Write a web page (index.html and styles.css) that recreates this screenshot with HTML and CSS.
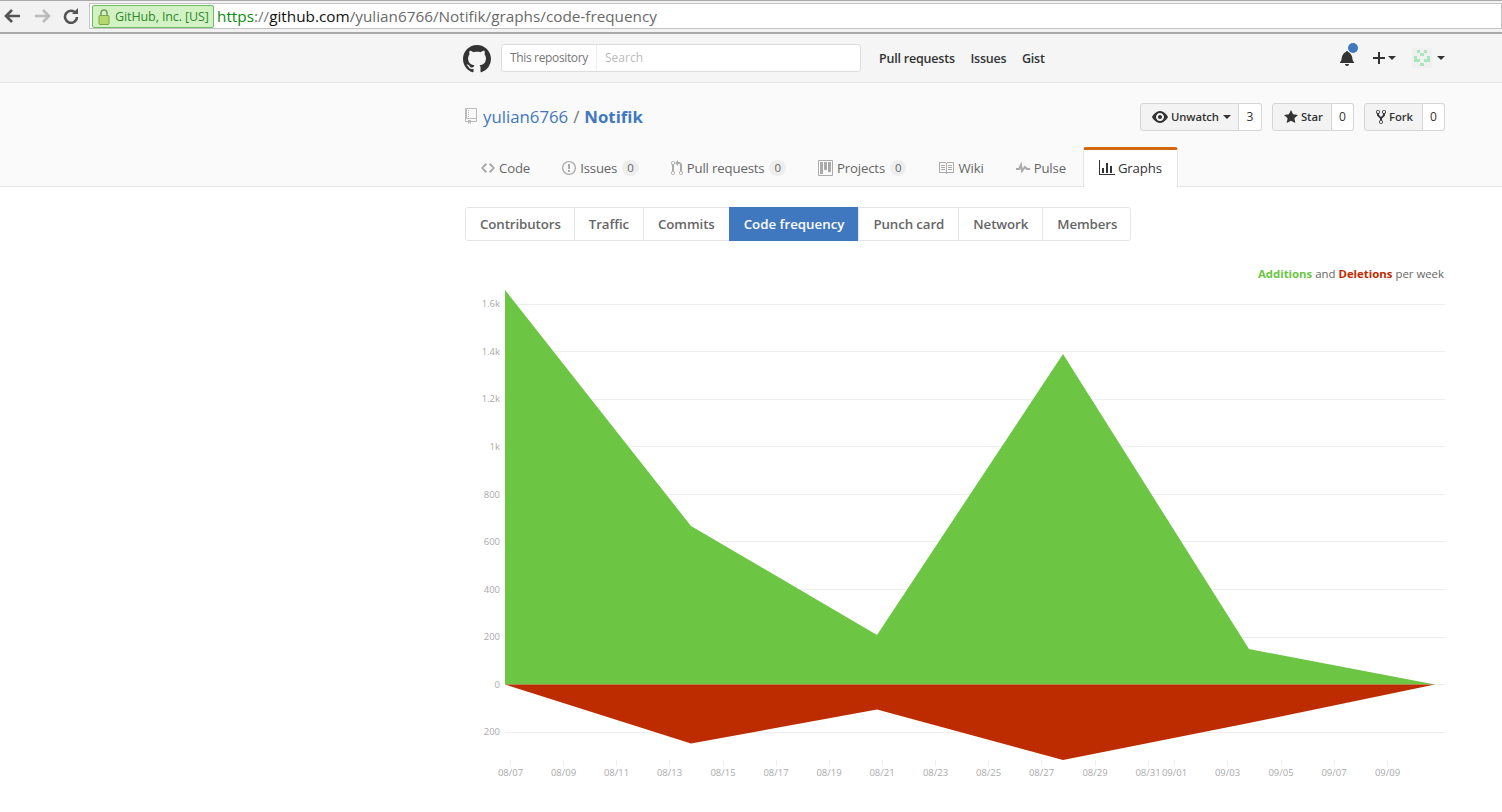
FILE: index.html
```html
<!DOCTYPE html>
<html lang="en">

<head>
    <meta charset="UTF-8">
    <title>Code frequency</title>
    <link rel="stylesheet" href="styles.css">
</head>

<body>
    <div class="browser-bar">
        <svg class="nav-icon" width="18" height="16" viewBox="0 0 18 16"><path d="M8 2 2 8l6 6M2 8h14" fill="none" stroke="#555" stroke-width="2.6"/></svg>
        <svg class="nav-icon" width="18" height="16" viewBox="0 0 18 16"><path d="M10 2l6 6-6 6M16 8H2" fill="none" stroke="#bbb" stroke-width="2.6"/></svg>
        <svg class="nav-icon" width="18" height="16" viewBox="0 0 18 16"><path d="M14 5.5A6 6 0 1 0 15 9" fill="none" stroke="#555" stroke-width="2.6"/><path d="M10 6h6V0z" fill="#555"/></svg>
        <div class="omnibox">
            <div class="ev-badge">
                <svg width="12" height="17" viewBox="0 0 12 17"><path d="M3 8V5a3 3 0 0 1 6 0v3" fill="none" stroke="#7a9a5a" stroke-width="1.5"/><rect x="1" y="7.5" width="10" height="9" rx="1" fill="#b5d96b" stroke="#7fa24f"/></svg>
                <span>GitHub, Inc. [US]</span>
            </div>
            <div class="url"><span class="url-scheme">https</span><span class="url-sep">://</span><span class="url-host">github.com</span>/yulian6766/Notifik/graphs/code-frequency</div>
        </div>
    </div>

    <header class="site-header">
        <div class="container header-inner">
            <svg class="logo" width="28" height="28" viewBox="0 0 16 16"><path d="M8 0C3.58 0 0 3.58 0 8c0 3.54 2.29 6.53 5.47 7.59.4.07.55-.17.55-.38 0-.19-.01-.82-.01-1.49-2.01.37-2.53-.49-2.69-.94-.09-.23-.48-.94-.82-1.13-.28-.15-.68-.52-.01-.53.63-.01 1.08.58 1.23.82.72 1.21 1.87.87 2.33.66.07-.52.28-.87.51-1.07-1.78-.2-3.64-.89-3.64-3.95 0-.87.31-1.59.82-2.15-.08-.2-.36-1.02.08-2.12 0 0 .67-.21 2.2.82.64-.18 1.32-.27 2-.27.68 0 1.36.09 2 .27 1.53-1.04 2.2-.82 2.2-.82.44 1.1.16 1.92.08 2.12.51.56.82 1.27.82 2.15 0 3.07-1.87 3.75-3.65 3.95.29.25.54.73.54 1.48 0 1.07-.01 1.93-.01 2.2 0 .21.15.46.55.38A8.013 8.013 0 0 0 16 8c0-4.42-3.58-8-8-8z" fill="#333"/></svg>
            <div class="search">
                <span class="search-scope">This repository</span>
                <span class="search-input">Search</span>
            </div>
            <nav class="header-nav">
                <a>Pull requests</a>
                <a>Issues</a>
                <a>Gist</a>
            </nav>
            <div class="header-right">
                <span class="bell">
                    <svg width="14" height="16" viewBox="0 0 14 16"><path d="M14 12v1H0v-1l.73-.58c.77-.77.81-2.55 1.19-4.42C2.69 3.23 6 2 6 2c0-.55.45-1 1-1s1 .45 1 1c0 0 3.39 1.23 4.16 5 .38 1.88.42 3.66 1.19 4.42l.66.58H14zm-7 4c1.11 0 2-.89 2-2H5c0 1.11.89 2 2 2z" fill="#333"/></svg>
                    <span class="bell-dot"></span>
                </span>
                <span class="header-menu">
                    <svg width="12" height="16" viewBox="0 0 12 16"><path d="M12 9H7v5H5V9H0V7h5V2h2v5h5v2z" fill="#333"/></svg>
                    <span class="caret"></span>
                </span>
                <span class="header-menu">
                    <svg class="avatar" width="20" height="20" viewBox="0 0 20 20">
                        <rect width="20" height="20" fill="#f0f0f0"/>
                        <path d="M2 8h3v3H2zM15 8h3v3h-3zM2 11h3v3H2zM15 11h3v3h-3zM5 2h3v3H5zM12 2h3v3h-3zM8 5h4v3H8zM5 11h3v3H5zM12 11h3v3h-3zM8 15h4v3H8z" fill="#a8e6c0"/>
                    </svg>
                    <span class="caret"></span>
                </span>
            </div>
        </div>
    </header>

    <div class="pagehead">
        <div class="container">
            <div class="repo-row">
                <h1 class="repo-title">
                    <svg class="repo-icon" width="12" height="16" viewBox="0 0 12 16"><path d="M4 9H3V8h1v1zm0-3H3v1h1V6zm0-2H3v1h1V4zm0-2H3v1h1V2zm8-1v12c0 .55-.45 1-1 1H6v2l-1.5-1.5L3 16v-2H1c-.55 0-1-.45-1-1V1c0-.55.45-1 1-1h10c.55 0 1 .45 1 1zm-1 10H1v2h2v-1h3v1h5v-2zm0-10H2v9h9V1z" fill="#bbb"/></svg>
                    <a>yulian6766</a>
                    <span class="repo-sep">/</span>
                    <a class="repo-name">Notifik</a>
                </h1>
                <ul class="repo-actions">
                    <li class="action">
                        <span class="action-btn action-btn-watch">
                            <svg width="16" height="16" viewBox="0 0 16 16"><path d="M8.06 2C3 2 0 8 0 8s3 6 8.06 6C13 14 16 8 16 8s-3-6-7.94-6zM8 12c-2.2 0-4-1.78-4-4 0-2.2 1.8-4 4-4 2.22 0 4 1.8 4 4 0 2.22-1.78 4-4 4zm2-4c0 1.11-.89 2-2 2-1.11 0-2-.89-2-2 0-1.11.89-2 2-2 1.11 0 2 .89 2 2z" fill="#333"/></svg>
                            Unwatch
                            <span class="caret caret-small"></span>
                        </span>
                        <span class="action-count action-count-watch">3</span>
                    </li>
                    <li class="action">
                        <span class="action-btn action-btn-star">
                            <svg width="14" height="16" viewBox="0 0 14 16"><path d="M14 6l-4.9-.64L7 1 4.9 5.36 0 6l3.6 3.26L2.67 14 7 11.67 11.33 14l-.93-4.74L14 6z" fill="#333"/></svg>
                            Star
                        </span>
                        <span class="action-count">0</span>
                    </li>
                    <li class="action">
                        <span class="action-btn action-btn-fork">
                            <svg width="10" height="16" viewBox="0 0 10 16"><path d="M8 1a1.993 1.993 0 0 0-1 3.72V6L5 8 3 6V4.72A1.993 1.993 0 0 0 2 1a1.993 1.993 0 0 0-1 3.72V6.5l3 3v1.78A1.993 1.993 0 0 0 5 15a1.993 1.993 0 0 0 1-3.72V9.5l3-3V4.72A1.993 1.993 0 0 0 8 1zM2 4.2C1.34 4.2.8 3.65.8 3c0-.65.55-1.2 1.2-1.2.65 0 1.2.55 1.2 1.2 0 .65-.55 1.2-1.2 1.2zm3 10c-.66 0-1.2-.55-1.2-1.2 0-.65.55-1.2 1.2-1.2.65 0 1.2.55 1.2 1.2 0 .65-.55 1.2-1.2 1.2zm3-10c-.66 0-1.2-.55-1.2-1.2 0-.65.55-1.2 1.2-1.2.65 0 1.2.55 1.2 1.2 0 .65-.55 1.2-1.2 1.2z" fill="#333"/></svg>
                            Fork
                        </span>
                        <span class="action-count">0</span>
                    </li>
                </ul>
            </div>
            <nav class="repo-tabs">
                <a class="tab">
                    <svg width="14" height="16" viewBox="0 0 14 16"><path d="M9.5 3L8 4.5 11.5 8 8 11.5 9.5 13 14 8 9.5 3zm-5 0L0 8l4.5 5L6 11.5 2.5 8 6 4.5 4.5 3z"/></svg>
                    Code
                </a>
                <a class="tab">
                    <svg width="14" height="16" viewBox="0 0 14 16"><path d="M7 2.3c3.14 0 5.7 2.56 5.7 5.7s-2.56 5.7-5.7 5.7A5.71 5.71 0 0 1 1.3 8c0-3.14 2.56-5.7 5.7-5.7zM7 1C3.14 1 0 4.14 0 8s3.14 7 7 7 7-3.14 7-7-3.14-7-7-7zm1 3H6v5h2V4zm0 6H6v2h2v-2z"/></svg>
                    Issues <span class="counter">0</span>
                </a>
                <a class="tab">
                    <svg width="12" height="16" viewBox="0 0 12 16"><path d="M11 11.28V5c-.03-.78-.34-1.47-.94-2.06C9.46 2.35 8.78 2.03 8 2H7V0L4 3l3 3V4h1c.27.02.48.11.69.31.21.2.3.42.31.69v6.28A1.993 1.993 0 0 0 10 15a1.993 1.993 0 0 0 1-3.72zm-1 2.92c-.66 0-1.2-.55-1.2-1.2 0-.65.55-1.2 1.2-1.2.65 0 1.2.55 1.2 1.2 0 .65-.55 1.2-1.2 1.2zM4 3c0-1.11-.89-2-2-2a1.993 1.993 0 0 0-1 3.72v6.56A1.993 1.993 0 0 0 2 15a1.993 1.993 0 0 0 1-3.72V4.72c.59-.34 1-.98 1-1.72zm-.8 10c0 .66-.55 1.2-1.2 1.2-.65 0-1.2-.55-1.2-1.2 0-.65.55-1.2 1.2-1.2.65 0 1.2.55 1.2 1.2zM2 4.2C1.34 4.2.8 3.65.8 3c0-.65.55-1.2 1.2-1.2.65 0 1.2.55 1.2 1.2 0 .65-.55 1.2-1.2 1.2z"/></svg>
                    Pull requests <span class="counter">0</span>
                </a>
                <a class="tab">
                    <svg width="15" height="16" viewBox="0 0 15 16"><path fill-rule="evenodd" d="M10 12h3V2h-3v10zm-4-2h3V2H6v8zm-4 4h3V2H2v12zm-1 1h13V1H1v14zM14 0H1a1 1 0 0 0-1 1v14a1 1 0 0 0 1 1h13a1 1 0 0 0 1-1V1a1 1 0 0 0-1-1z"/></svg>
                    Projects <span class="counter">0</span>
                </a>
                <a class="tab">
                    <svg width="16" height="16" viewBox="0 0 16 16"><path d="M3 5h4v1H3V5zm0 3h4V7H3v1zm0 2h4V9H3v1zm11-5h-4v1h4V5zm0 2h-4v1h4V7zm0 2h-4v1h4V9zm2-6v9c0 .55-.45 1-1 1H9.5l-1 1-1-1H2c-.55 0-1-.45-1-1V3c0-.55.45-1 1-1h5.5l1 1 1-1H15c.55 0 1 .45 1 1zm-8 .5L7.5 3H2v9h6V3.5zm7-.5H9.5l-.5.5V12h6V3z"/></svg>
                    Wiki
                </a>
                <a class="tab">
                    <svg width="14" height="16" viewBox="0 0 14 16"><path d="M11.5 8L8.8 5.4 6.6 8.5 5.5 1.6 2.38 8H0v2h3.6l.9-1.8.9 5.4L9 8.5l1.6 1.5H14V8z"/></svg>
                    Pulse
                </a>
                <a class="tab tab-selected">
                    <svg width="16" height="16" viewBox="0 0 16 16"><path d="M16 14v1H0V0h1v14h15zM5 13H3V8h2v5zm4 0H7V3h2v10zm4 0h-2V6h2v7z"/></svg>
                    Graphs
                </a>
            </nav>
        </div>
    </div>

    <main class="container">
        <nav class="subnav">
            <a class="subnav-item">Contributors</a>
            <a class="subnav-item">Traffic</a>
            <a class="subnav-item">Commits</a>
            <a class="subnav-item subnav-selected">Code frequency</a>
            <a class="subnav-item">Punch card</a>
            <a class="subnav-item">Network</a>
            <a class="subnav-item">Members</a>
        </nav>

        <p class="legend"><b class="legend-add">Additions</b> and <b class="legend-del">Deletions</b> per week</p>

        <!-- viewBox uses page coordinates so the points read straight off the reference -->
        <svg class="chart" width="980" height="506" viewBox="465 284 980 506">
            <g class="grid">
                <line x1="505" x2="1445" y1="304.5" y2="304.5"/>
                <line x1="505" x2="1445" y1="351.5" y2="351.5"/>
                <line x1="505" x2="1445" y1="399.5" y2="399.5"/>
                <line x1="505" x2="1445" y1="446.5" y2="446.5"/>
                <line x1="505" x2="1445" y1="494.5" y2="494.5"/>
                <line x1="505" x2="1445" y1="541.5" y2="541.5"/>
                <line x1="505" x2="1445" y1="589.5" y2="589.5"/>
                <line x1="505" x2="1445" y1="637.5" y2="637.5"/>
                <line x1="505" x2="1445" y1="684.5" y2="684.5"/>
                <line x1="505" x2="1445" y1="732.5" y2="732.5"/>
            </g>
            <polygon class="area-add" points="505,290 691,526 877,635 1063,354 1249,649 1435,684.5 505,684.5"/>
            <polygon class="area-del" points="505,684.5 691,743.5 877,709.5 1063,760 1249,723 1435,684.5"/>
            <g class="y-labels">
                <text x="500" y="307">1.6k</text>
                <text x="500" y="355">1.4k</text>
                <text x="500" y="402">1.2k</text>
                <text x="500" y="450">1k</text>
                <text x="500" y="498">800</text>
                <text x="500" y="545">600</text>
                <text x="500" y="593">400</text>
                <text x="500" y="640">200</text>
                <text x="500" y="688">0</text>
                <text x="500" y="735">200</text>
            </g>
            <g class="x-ticks">
                <path d="M510.5 760v6M563.5 760v6M616.5 760v6M669.5 760v6M723.5 760v6M776.5 760v6M829.5 760v6M882.5 760v6M935.5 760v6M988.5 760v6M1041.5 760v6M1095.5 760v6M1148.5 760v6M1174.5 760v6M1227.5 760v6M1281.5 760v6M1334.5 760v6M1387.5 760v6"/>
            </g>
            <g class="x-labels">
                <text x="510.5" y="776">08/07</text>
                <text x="563.5" y="776">08/09</text>
                <text x="616.5" y="776">08/11</text>
                <text x="669.5" y="776">08/13</text>
                <text x="723" y="776">08/15</text>
                <text x="776" y="776">08/17</text>
                <text x="829" y="776">08/19</text>
                <text x="882" y="776">08/21</text>
                <text x="935.5" y="776">08/23</text>
                <text x="988.5" y="776">08/25</text>
                <text x="1041.5" y="776">08/27</text>
                <text x="1095" y="776">08/29</text>
                <text x="1148" y="776">08/31</text>
                <text x="1174.5" y="776">09/01</text>
                <text x="1227.5" y="776">09/03</text>
                <text x="1281" y="776">09/05</text>
                <text x="1334" y="776">09/07</text>
                <text x="1387.5" y="776">09/09</text>
            </g>
        </svg>
    </main>
</body>

</html>
```

FILE: styles.css
```css
html, body {
    margin: 0;
    padding: 0;
    height: 812px;
    overflow: hidden;
}

body {
    font-family: "Open Sans", "Noto Sans", sans-serif;
    font-size: 13px;
    color: #333;
    background: #fff;
}

.container {
    width: 980px;
    margin-left: 465px;
}

.browser-bar {
    display: flex;
    align-items: center;
    height: 34px;
    box-sizing: border-box;
    padding: 2px 0 3px 4px;
    background: #f2f2f2;
    border-top: 1px solid #aaa;
    border-bottom: 2px solid #a9a9a9;
}

.nav-icon {
    margin-right: 11px;
    flex: none;
}

.omnibox {
    flex: 1;
    display: flex;
    align-items: center;
    gap: 3px;
    height: 26px;
    box-sizing: border-box;
    margin-left: -2px;
    padding-left: 2px;
    background: #fff;
    border: 1px solid #c4c4c4;
}

.ev-badge {
    display: flex;
    align-items: center;
    gap: 5px;
    width: 122px;
    height: 23px;
    box-sizing: border-box;
    padding-left: 5px;
    font-size: 12.5px;
    letter-spacing: -0.1px;
    white-space: nowrap;
    color: #2b8a2b;
    background: #d3f2c4;
    border: 1px solid #6dbb62;
    border-radius: 2px;
}

.url {
    font-size: 15.3px;
    color: #6a6a6a;
    white-space: nowrap;
}

.url-scheme {
    color: #0a8a0a;
}

.url-sep {
    color: #777;
}

.url-host {
    color: #111;
}

.site-header {
    height: 49px;
    box-sizing: border-box;
    background: #f5f5f5;
    border-bottom: 1px solid #e5e5e5;
}

.header-inner {
    display: flex;
    align-items: center;
    height: 48px;
}

.logo {
    flex: none;
    margin-left: -2px;
    margin-top: 1px;
    margin-right: 10px;
}

.search {
    display: flex;
    align-items: stretch;
    width: 360px;
    height: 28px;
    box-sizing: border-box;
    background: #fff;
    border: 1px solid #ddd;
    border-radius: 3px;
    font-size: 12px;
    line-height: 26px;
}

.search-scope {
    width: 95px;
    box-sizing: border-box;
    padding-left: 8px;
    color: #767676;
    letter-spacing: -0.35px;
    white-space: nowrap;
    border-right: 1px solid #eee;
}

.search-input {
    padding-left: 8px;
    color: #bbb;
}

.header-nav {
    display: flex;
    gap: 15.5px;
    margin-left: 18px;
    font-size: 12.5px;
    font-weight: 600;
    letter-spacing: -0.2px;
    color: #333;
}

.header-right {
    display: flex;
    align-items: center;
    margin-left: auto;
    gap: 16px;
}

.bell {
    position: relative;
    display: flex;
    margin-right: 3px;
}

.bell-dot {
    position: absolute;
    top: -7px;
    left: 8px;
    width: 10px;
    height: 10px;
    border-radius: 50%;
    background: #4078c0;
}

.header-menu {
    display: flex;
    align-items: center;
    gap: 3px;
}

.avatar {
    margin-right: 2px;
}

.caret {
    width: 0;
    height: 0;
    border: 4px solid transparent;
    border-top-color: #333;
    border-bottom: 0;
}

.caret-small {
    margin-left: 1px;
}

.pagehead {
    height: 104px;
    box-sizing: border-box;
    background: #fafafa;
    border-bottom: 1px solid #e5e5e5;
}

.repo-row {
    display: flex;
    justify-content: space-between;
    align-items: flex-start;
    padding-top: 20px;
    height: 64px;
    box-sizing: border-box;
}

.repo-title {
    display: flex;
    align-items: center;
    gap: 5px;
    margin: 0;
    height: 26px;
    font-size: 16.8px;
    font-weight: 400;
    color: #4078c0;
}

.repo-icon {
    margin-right: 1px;
}

.repo-sep {
    color: #767676;
}

.repo-name {
    font-weight: 700;
}

.repo-actions {
    display: flex;
    gap: 10px;
    margin: 0;
    padding: 0;
    list-style: none;
}

.action {
    display: flex;
    height: 28px;
    font-size: 11.3px;
    font-weight: 600;
    letter-spacing: -0.1px;
    line-height: 26px;
}

.action-btn {
    display: flex;
    align-items: center;
    gap: 3px;
    box-sizing: border-box;
    padding-left: 11px;
    background: #f3f3f3;
    border: 1px solid #d5d5d5;
    border-radius: 3px 0 0 3px;
}

.action-btn-watch {
    width: 99px;
}

.action-btn-star {
    width: 60px;
}

.action-btn-fork {
    width: 59px;
}

.action-count {
    width: 22px;
    box-sizing: border-box;
    font-size: 12px;
    font-weight: 400;
    text-align: center;
    background: #fff;
    border: 1px solid #d5d5d5;
    border-left: 0;
    border-radius: 0 3px 3px 0;
}

.action-count-watch {
    width: 23px;
}

.repo-tabs {
    display: flex;
    height: 39px;
}

.tab {
    display: flex;
    align-items: center;
    gap: 4px;
    box-sizing: border-box;
    height: 40px;
    padding: 2px 16px 0;
    font-size: 13.2px;
    letter-spacing: -0.15px;
    color: #666;
    white-space: nowrap;
}

.tab svg {
    flex: none;
    fill: #aaa;
}

.tab-selected {
    gap: 3px;
    margin-left: 1px;
    padding: 0 15px 2px;
    color: #333;
    background: #fff;
    border: 1px solid #e5e5e5;
    border-top: 3px solid #d26911;
    border-bottom: 0;
    border-radius: 3px 3px 0 0;
}

.tab-selected svg {
    fill: #333;
}

.counter {
    margin-left: 1px;
    padding: 0 5px;
    font-size: 11.5px;
    line-height: 16px;
    color: #666;
    background: #eee;
    border-radius: 20px;
}

.subnav {
    display: flex;
    width: max-content;
    margin-top: 20px;
    border: 1px solid #e5e5e5;
    border-radius: 3px;
}

.subnav-item {
    padding: 0 14px;
    height: 32px;
    line-height: 32px;
    font-size: 13.3px;
    font-weight: 600;
    letter-spacing: -0.1px;
    color: #666;
    border-left: 1px solid #e5e5e5;
}

.subnav-item:first-child {
    padding-right: 13px;
    border-left: 0;
}

.subnav-item:last-child {
    padding-right: 13px;
}

.subnav-selected {
    margin: -1px 0;
    padding: 0 14px 0 15px;
    height: 34px;
    line-height: 34px;
    letter-spacing: 0;
    color: #fff;
    background: #4078c0;
    border-left: 0;
}

.legend {
    margin: 24px 1px 0 0;
    height: 18px;
    text-align: right;
    font-size: 11.4px;
    line-height: 18px;
    color: #666;
}

.legend-add {
    color: #6cc644;
}

.legend-del {
    color: #bd2c00;
}

.chart {
    display: block;
    margin-top: 1px;
}

.grid line {
    stroke: #eee;
    stroke-width: 1;
}

.area-add {
    fill: #6cc644;
}

.area-del {
    fill: #bd2c00;
}

.y-labels text {
    font-size: 9.5px;
    fill: #aaa;
    text-anchor: end;
}

.x-ticks path {
    stroke: #eee;
    fill: none;
}

.x-labels text {
    font-size: 9.5px;
    fill: #aaa;
    text-anchor: middle;
}
```
